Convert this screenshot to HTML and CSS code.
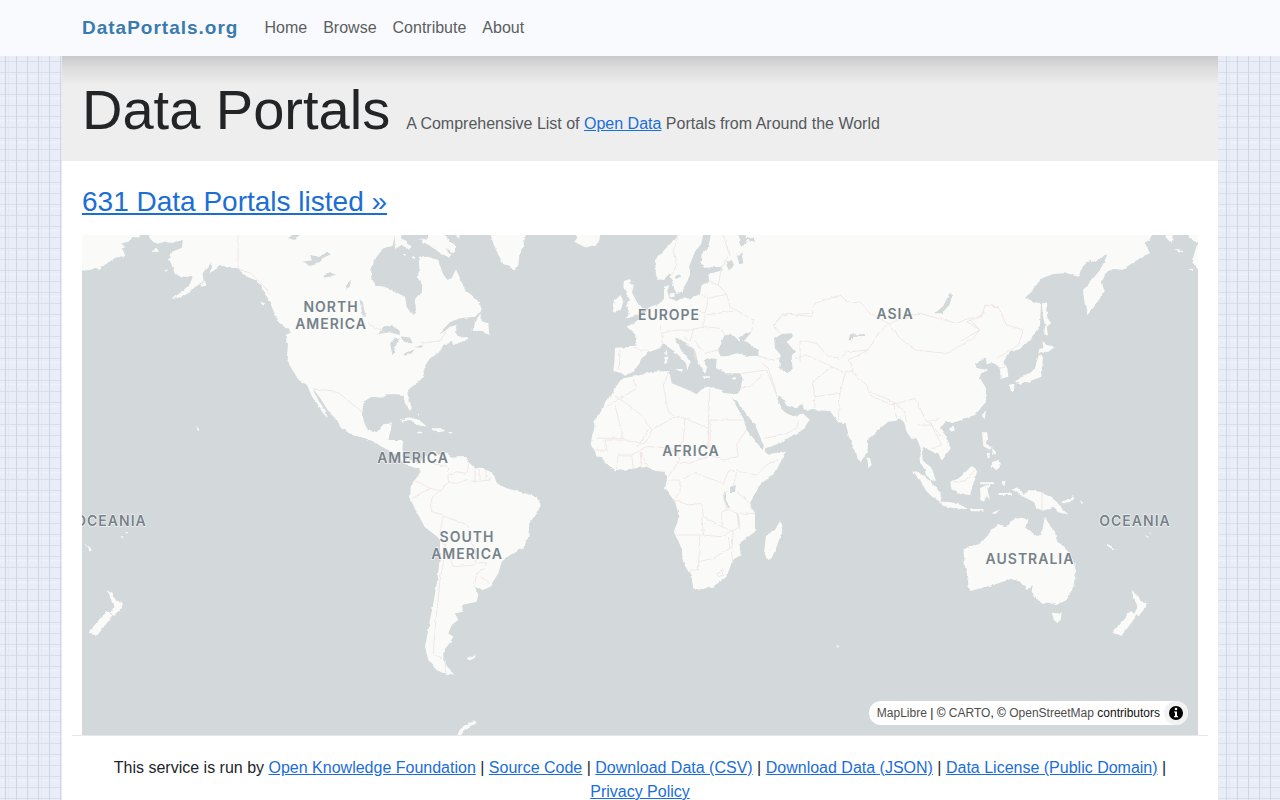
FILE: index.html
```html
<!DOCTYPE html>
<html lang="en">
<head>
<meta charset="utf-8">
<meta name="viewport" content="width=device-width, initial-scale=1">
<title>Data Portals</title>
<link rel="stylesheet" href="styles.css">
</head>
<body>
<header class="navbar">
  <nav class="navbar-inner">
    <a class="brand" href="#">DataPortals.org</a>
    <ul class="nav-links">
      <li><a href="#">Home</a></li>
      <li><a href="#">Browse</a></li>
      <li><a href="#">Contribute</a></li>
      <li><a href="#">About</a></li>
    </ul>
  </nav>
</header>
<div class="page">
  <section class="hero">
    <h1>Data Portals</h1>
    <p>A Comprehensive List of <a href="#">Open Data</a> Portals from Around the World</p>
  </section>
  <main class="content">
    <h2><a href="#">631 Data Portals listed »</a></h2>
    <div class="map">
      <svg class="world" viewBox="82 235 1116 500" preserveAspectRatio="xMidYMid slice" role="img" aria-label="World map">
        <defs>
          <filter id="coast" x="0" y="0" width="100%" height="100%">
            <feTurbulence type="fractalNoise" baseFrequency="0.18" numOctaves="2" seed="4"/>
            <feDisplacementMap in="SourceGraphic" scale="3" xChannelSelector="R" yChannelSelector="G"/>
          </filter>
        </defs>
        <g filter="url(#coast)">
        <rect class="sea" x="72" y="225" width="1136" height="520"/>
        <g class="land">
          <!-- Alaska, Canada west, USA west, Mexico -->
          <g transform="translate(82 235) scale(.33333)">
            <path d="M-20-20H172L170 8 150 5 140 20 118 25 130 36 120 40 130 62 100 68 70 88 52 105 42 98 25 105-20 108Z"/>
            <path d="M200-20L202 8 215 22 228 26 248 20 270 24 290 18 302 18 300 38 270 50 262 75 270 92 280 118 300 125 332 125 325 145 300 170 268 192 292 188 320 175 345 150 365 140 362 115 388 82 390 98 378 118 408 98 412 90 440 98 465 100 495 125 520 135 540 155 550 180 567 210 580 240 600 262 627 292 614 300 618 330 614 370 622 390 650 435 675 450 690 485 705 505 720 530 738 552 730 525 712 500 698 475 694 462 715 490 740 530 765 555 778 580 810 600 850 610 885 620 900 635V590L875 592 850 577 838 550 842 520 846 500 860 487H866V300L850 150V-20Z"/>
            <path d="M247 102L258 105 250 110ZM208 44L225 42 232 50 215 50ZM355 148L368 140 374 148 360 156ZM535 200L550 205 542 212ZM580 245L598 252 622 278 612 280 590 262ZM344 572L352 580 346 586Z"/>
          </g>
          <!-- Canada east, USA east, Greenland, Caribbean -->
          <g transform="translate(360 235) scale(.33333)">
            <path d="M-5-20H108L98 32 70 40 50 65 35 95 32 125 48 152 75 155 105 170 135 185 140 215 155 238 168 228 165 192 185 170 187 150 173 128 178 100 176 68 200 65 235 75 248 115 262 135 275 130 288 103 305 140 315 165 335 180 360 205 364 228 345 245 300 250 270 262 235 298 250 292 270 275 290 270 285 290 295 305 320 303 325 312 290 327 278 330 275 318 250 330 235 355 210 370 190 400 192 425 175 440 150 460 142 475 150 500 155 520 150 528 135 505 130 480 110 478 80 478 70 488 35 485 10 500 5 530 12 560 25 590 50 592 70 568 95 565 92 590 85 615 125 618 128 650 120 665 95 650 65 635 45 622-5 600V480H-5Z"/>
            <path d="M103-20H122L125 8 155 35 145 44 125 30 105 42ZM172 15L188 10 186 25 210 30 235 50 268 68 275 60 255 38 285 55 285 30 265 15 248-20H200L205 10ZM128 60l8-6 2 8ZM154 66l8-2v10ZM285-20h12l2 30-8 0Z"/>
            <path d="M386-20L400 25 415 60 430 88 448 92 465 106 475 90 478 60 490 30 502-20ZM635-20L652 8 643 20 662 30 680 40 705 32 718 18 722-20Z"/>
            <path d="M362 235L352 250 337 285 365 284 375 294 388 299 385 265 362 258Z"/>
            <path d="M120 553L150 547 180 558 200 574 180 572 150 555 125 560ZM215 580L240 580 256 588 235 592 218 588ZM266 591H279V595H266ZM172 590H186V595H172ZM174 530l4 12-4-2Z"/>
          </g>
          <!-- Central and South America, Antarctic Peninsula -->
          <g transform="translate(360 440) scale(.33333)">
            <path d="M45 0H130L126 30 134 58 160 62 182 72 188 92 168 84 140 75 115 50 98 25Z"/>
            <path d="M178 80L185 58 220 35 228 30 235 45 252 35 275 50 310 48 325 65 345 85 375 88 400 100 410 130 440 145 490 158 530 170 543 195 530 220 508 250 505 290 490 325 450 345 425 365 415 400 390 440 370 450 345 442 355 465 350 485 305 495 310 515 285 520 295 540 275 555 265 580 280 590 265 615 250 640 250 660 265 685 282 700 262 706 230 690 205 660 195 620 205 570 210 540 222 480 232 420 240 350 240 300 232 290 195 262 175 225 150 180 152 140 165 120 182 95Z"/>
            <path d="M320 654L330 650 347 646 343 656 326 661ZM290 890L300 868 325 852 345 841 349 848 315 868 300 890Z"/>
          </g>
          <!-- Europe and North Africa -->
          <g transform="translate(580 235) scale(.33333)">
            <path d="M295-20L290 8 262 35 225 75 228 120 235 135 252 132 270 115 278 145 290 178 308 168 325 130 333 115 327 95 345 50 365 25 372-20Z"/>
            <path d="M397-20L385 35 365 58 362 80 372 98 425 95 428 106 385 118 388 140 365 150 360 178 330 190 300 192 290 198 270 190 262 170 268 150 252 155 252 195 235 208 210 215 185 245 165 262 140 275 165 298 170 335 105 338 103 380 100 408 125 415 135 422 165 408 185 370 210 350 232 342 250 328 262 335 285 350 300 365 318 385 322 403 332 380 325 368 305 348 288 318 286 308 300 312 325 330 345 345 352 375 365 402 375 416 382 400 372 376 385 368 410 372 408 400 440 415 480 415 488 430 480 470 470 478 440 475 425 465 385 455 370 458 350 478 325 465 275 445 268 408 220 410 155 425 130 430 115 445 100 470 80 505 45 560 40 600 35 625 50 665H530L556 640 600 625 640 600 670 585 690 555 668 535 660 525 700 522V-20Z"/>
            <path d="M132 138L150 132 148 145 162 150 156 172 170 200 186 222 180 238 136 252 150 235 138 212 150 195 138 175 130 155ZM105 195L122 180 130 200 122 225 98 230ZM285 402L308 402 306 412ZM253 366l9-1-1 20-8 2ZM256 350l5-5 1 15-5 0ZM368 424h22v5h-20ZM453 431l14-5-4 8ZM270 175l14-2 0 12-12 2Z"/>
          </g>
          <!-- Central and South Asia -->
          <g transform="translate(760 235) scale(.33333)">
            <path d="M-5-20H640V540L590 560 556 562 540 580 560 605 572 640 545 677 535 655 510 648 494 635 486 650 488 675 515 715 495 705 480 680 482 640 470 610 455 612 440 590 432 562 415 550 410 557 385 560 355 585 325 612 322 650 302 682 285 650 265 600 258 565 235 562 210 528 150 525 120 515-5 500Z"/>
            <path d="M322 665l8 5 5 20-10 10ZM570 578l12-3 2 10-10 5Z"/>
          </g>
          <!-- East Asia and Siberia -->
          <g transform="translate(960 235) scale(.33333)">
            <path d="M-5-20H580L572 8 555 25 570 55 552 62 500 95 490 104 460 102 440 112 425 140 432 165 420 190 395 225 382 240 373 200 369 165 385 148 420 105 442 62 432 60 405 82 388 75 368 95 355 125 320 115 280 117 245 130 225 155 195 190 215 197 243 208 240 270 215 310 180 342 150 352 130 380 142 400 145 425 122 432 120 402 100 380 80 388 78 370 45 385 50 400 85 405 62 416 60 430 78 460 78 500 45 540-5 556Z"/>
            <path d="M608-20L618 8 636 26 640-20ZM680-20L688 10 714 25 730-20ZM730 20L710 32 696 80 714 105 730 105ZM648 42L665 44 670 52 652 48ZM686 103l14-2-2 8Z"/>
            <path d="M246 205L258 203 262 248 273 265 260 275 264 300 252 302 255 270 248 240ZM248 318L262 330 286 335 265 350 245 350 235 356 238 342 250 340ZM236 360L249 366 244 425 205 440 190 443 165 441 175 430 208 418 225 398ZM146 450L162 446 164 455 155 472ZM168 446L188 440 182 451ZM66 542L78 524 74 556Z"/>
            <path d="M66 592l15 0 3 20-8 12 20 14-6 6-20-10ZM80 652l12 4-4 14-6-2ZM96 640l12 10-2 10-8-6ZM96 682l20-8 4 22-11 10-13-12Z"/>
          </g>
          <!-- Africa and Arabia -->
          <g transform="translate(580 400) scale(.33333)">
            <path d="M85-10L60 40 40 65 45 80 35 110 33 130 70 180 105 214 130 210 200 200 225 212 250 215 262 230 255 265 285 305 298 350 282 395 305 450 310 490 335 530 340 565 350 570 400 560 440 530 458 480 482 465 478 430 525 395 525 340 510 310 535 260 590 210 618 152 570 162 555 155 545 140 500 90 480 30 465-10Z"/>
            <path d="M600 362L607 390 590 440 575 475 565 480 552 460 558 405 585 390Z"/>
          </g>
          <!-- South-east Asia and Oceania -->
          <g transform="translate(880 440) scale(.33333)">
            <path d="M95 90L115 96 150 123 182 158 182 186 160 174 138 152 122 122ZM118 40L128 62 155 83 168 122 155 122 138 105 132 80 120 68ZM182 185L210 186 240 194 264 206 235 208 188 197ZM210 125L240 112 275 78 292 90 285 120 270 165 240 162 215 148ZM300 145l14-8 22-3-14 12 8 34-12-14-8 20-8-10ZM300 127h42v6h-40ZM366 120l11 2-4 16-6-4ZM355 159h40v6h-38ZM270 207h40v7h-38ZM334 220l26-12-14 14Z"/>
            <path d="M395 148L415 142 426 155 430 165 445 150 480 155 510 170 530 185 550 210 565 223 540 218 520 200 490 212 470 205 460 185 430 170ZM545 184l26-6 8-14 4 12-14 14-22 0ZM600 180l10 8-5 4ZM682 310l26 20-8-1-18-12ZM795 287l13 3-8 4ZM808 279l9-2-3 6Z"/>
            <path d="M250 330L265 320 300 312 320 290 335 270 355 255 378 262 390 245 410 235 445 240 438 265 470 288 485 280 495 230 508 255 525 275 530 300 560 330 582 365 588 395 580 440 560 480 530 495 505 488 480 488 455 455 458 435 440 450 420 425 395 416 340 435 300 445 275 452 262 440 268 425 255 380Z"/>
            <path d="M515 518L530 520 545 518 542 540 532 550 522 540ZM753 450L772 463 782 484 803 486 797 502 776 528 763 521 773 500ZM752 513L770 526 748 557 724 588 698 578 720 550Z"/>
          </g>
          <g transform="translate(60 500) scale(.33333)">
            <path d="M140 268L158 278 168 302 190 306 185 322 165 348 151 339 161 318ZM139 333L157 346 135 377 110 408 86 398 108 370ZM72 130L96 150 88 151ZM181 107l13 3-8 4ZM195 97l10-2-4 6Z"/>
          </g>
          <path d="M836 645l3 1-1 2Z"/>
        </g>
        <!-- Inland seas and lakes -->
        <g class="sea">
          <g transform="translate(82 235) scale(.33333)">
            <path d="M832 193L842 200 852 245 842 240ZM660 80L690 76 684 60 712 66 735 50 747 58 725 68 710 85 685 93ZM724 130L735 114 766 118 750 122ZM792 162L798 145 807 138 803 155ZM618 10L640-8 657-5 640 14Z"/>
          </g>
          <g transform="translate(360 235) scale(.33333)">
            <path d="M55 297L70 275 95 270 120 292 118 300 88 292ZM97 360L90 325 105 308 122 312 106 330 102 355ZM120 303L150 308 158 325 140 324 130 315ZM130 358L165 342 155 355 135 362ZM160 336L190 330 185 338Z"/>
          </g>
          <g transform="translate(580 235) scale(.33333)">
            <path d="M415 350L432 302 455 296 475 315 500 320 535 345 535 362 505 364 470 355 440 364 422 364ZM475 308L492 298 515 290 500 312 482 318ZM582 312L605 297 635 295 635 308 620 320 645 350 635 362 638 405 620 415 598 400 602 360 585 340Z"/>
            <path d="M455 485L475 505 495 530 525 570 552 632 548 645 520 610 500 585 490 550 470 515ZM588 480L612 495 620 512 645 520 664 508 672 522 668 536 640 544 612 530 598 505Z"/>
            <path d="M478-8L500-8 500 10 520 5 525 20 502 15 486 38 478 25ZM438 80L455 75 462 90 445 107ZM472 65L484 52 490 85 478 88ZM284 125L298 118 300 126 288 132Z"/>
          </g>
          <g transform="translate(760 235) scale(.33333)">
            <path d="M525 235L550 213 568 175 579 177 568 210 545 235ZM266 316L270 298 315 298 315 303 282 302 272 316Z"/>
          </g>
          <path d="M730 487l6-3-1 8-5 0ZM724 492l2 0 0 8 4 8-2 0-4-8ZM737 512l1 0 2 13-2 0Z"/>
        </g>
        <!-- Country borders -->
        <g class="borders">
          <path d="M238 235V269L250 273 262 284 270 294M367 323L386 333M422 343L440 341 446 332M313 389L336 391 350 402 362 412"/>
          <g transform="translate(360 440) scale(.33333)">
            <path d="M225 42L215 70 262 80 265 125 242 152 210 145 180 128 165 124M155 175L190 155 210 145M242 152L215 175 215 215 240 222 250 228 285 240 325 260 328 300 345 325 350 370 380 365 375 385 350 400 342 442M355 405L390 430M250 228L240 275 252 310 250 370 240 420 232 500 225 570 220 640 245 660M265 105L290 95 320 100 330 70M262 125L290 130 320 120 345 125 345 90M345 125L390 120 400 100M360 90V120M378 90V120M252 310L280 380 345 375M256 660V700"/>
          </g>
          <g transform="translate(580 235) scale(.33333)">
            <path d="M295 0L280 50 290 90 275 120M430 0L448 60 425 95 415 150 440 178 450 215 520 255 515 290M390 140L415 150M365 180L385 190 440 178M385 190L375 235 340 220M380 240L460 228M240 270L245 295 290 285 330 285 375 275 420 280 435 300M250 330L245 295M310 305L330 320 340 285M320 325L345 345 345 370M345 320L375 355 415 345M375 240L370 280M120 345L118 405M165 340L210 350M535 360L565 375 600 370M580 270L610 240 690 235M580 270L600 295M485 415L560 405 590 480M480 460L510 455 545 420M160 430L170 460 105 500 80 515M105 480L185 540 215 585 285 545 315 550 385 580 390 460M105 510L130 610H50M268 410L250 450 265 530 285 545M315 550L310 620 260 660M390 555H490M385 580V640M215 585L200 620 170 635M550 610L610 600 650 580 655 560"/>
          </g>
          <g transform="translate(760 235) scale(.33333)">
            <path d="M0 380L25 400 50 475M40 270L70 235 155 245 165 205 240 180 270 205 300 200 330 235 385 265M385 265L355 295 325 345 265 350 240 370 205 365 170 325 120 315V380M385 265L420 310 465 345 560 355 640 310 660 285 625 250 590 265 480 235 385 265M625 250L665 245 675 210 715 215M105 370L140 360 215 395 250 410M160 440L165 520M160 440L215 395M165 485L240 475 255 415 280 405M240 475L235 555M280 405L265 375 325 345M270 405L320 450 330 480 395 510 465 490 475 510M330 470L400 500 410 550M400 505L430 520 440 560M475 510L500 560 540 550M475 570L515 570 545 630 515 640M505 560L550 610"/>
          </g>
          <g transform="translate(960 235) scale(.33333)">
            <path d="M0 320L60 285 20 260 65 245 75 210 115 215 140 270 190 285 175 330 110 370M115 400L135 395"/>
          </g>
          <g transform="translate(580 400) scale(.33333)">
            <path d="M40 150L80 150 75 120H150L180 130 205 90M110 210L115 165 155 165 160 205M185 200L180 155 205 200M155 165L200 140 290 145 300 180 265 230M290 185L330 190 390 165 430 180 475 170M390 60V150M475 210L445 215 430 250 345 220 310 235M475 215L530 225 560 195 595 180M475 170L470 130 500 90M470 215L460 260M445 265L430 290 440 330 425 335V380L370 350 365 310 325 315 280 300M265 240H300L300 275 280 300M365 350L370 405H290M370 405L420 410 460 390 480 380 470 340H525M360 405L355 510 330 510M355 485L400 475 450 445 445 410M425 380L460 395 455 450 458 490M410 520L425 510 430 525 415 530ZM470 275L510 310M440 330L470 335 480 390"/>
          </g>
          <path d="M1042 492V511M952 482L965 481 975 470"/>
        </g>
        </g>
        <g class="labels">
          <text x="331" y="312">NORTH</text>
          <text x="331" y="329">AMERICA</text>
          <text x="669" y="320">EUROPE</text>
          <text x="895" y="319">ASIA</text>
          <text x="413" y="463">AMERICA</text>
          <text x="691" y="456">AFRICA</text>
          <text x="467" y="542">SOUTH</text>
          <text x="467" y="559">AMERICA</text>
          <text x="1030" y="564">AUSTRALIA</text>
          <text x="1135" y="526">OCEANIA</text>
          <text x="111" y="526">OCEANIA</text>
        </g>
      </svg>
      <div class="attribution">
        <span><a href="#">MapLibre</a> | © <a href="#">CARTO</a>, © <a href="#">OpenStreetMap</a> contributors</span>
        <button type="button" aria-label="Toggle attribution">
          <svg viewBox="0 0 24 24" width="24" height="24" aria-hidden="true">
            <circle cx="12" cy="12" r="7"/>
            <circle class="mark" cx="12" cy="8" r="1.3"/>
            <path class="mark" d="M10 10.4h3v4.6h1v1.2h-4v-1.2h1v-3.4h-1z"/>
          </svg>
        </button>
      </div>
    </div>
  </main>
  <footer class="footer">
    This service is run by <a href="#">Open Knowledge Foundation</a> |
    <a href="#">Source Code</a> |
    <a href="#">Download Data (CSV)</a> |
    <a href="#">Download Data (JSON)</a> |
    <a href="#">Data License (Public Domain)</a> |
    <a href="#">Privacy Policy</a>
  </footer>
</div>
</body>
</html>
```
FILE: styles.css
```css
* {
  box-sizing: border-box;
}

body {
  margin: 0;
  font-family: "Liberation Sans", Arial, sans-serif;
  font-size: 16px;
  line-height: 24px;
  color: #212529;
  background-color: #e9edf8;
  background-image:
    linear-gradient(90deg, #d0d5e4 1px, transparent 1px),
    linear-gradient(#d9deeb 1px, transparent 1px),
    linear-gradient(90deg, #e3e8f5 1px, transparent 1px),
    linear-gradient(#f0f3fb 1px, transparent 1px);
  background-size: 11px 11px, 11px 11px, 33px 33px, 22px 22px;
  background-position: 5px 6px, 5px 6px, 8px 0, 0 10px;
}

a {
  color: #1b6ed6;
}

.navbar {
  background: #f8fafd;
}

.navbar-inner {
  display: flex;
  align-items: center;
  gap: 18px;
  max-width: 1156px;
  min-height: 56px;
  margin: 0 auto;
  padding: 0 20px;
}

.brand {
  font-size: 19px;
  font-weight: 700;
  letter-spacing: 1px;
  color: #3a7aae;
  text-decoration: none;
}

.nav-links {
  display: flex;
  margin: 0;
  padding: 0;
  list-style: none;
}

.nav-links a {
  display: block;
  padding: 8px;
  color: #5c5e60;
  text-decoration: none;
}

.page {
  max-width: 1156px;
  margin: 0 auto;
  background: #fff;
}

.hero {
  display: flex;
  flex-wrap: wrap;
  align-items: baseline;
  column-gap: 16px;
  padding: 20px 20px 18px;
  background: linear-gradient(#c9c9c9, #dcdcdc 12px, #eee 30px);
}

.hero h1 {
  margin: 0;
  font-size: 56px;
  font-weight: 400;
  line-height: 67px;
  color: #222426;
}

.hero p {
  margin: 0;
  color: #55595c;
}

.content {
  padding: 24px 20px 0;
}

.content h2 {
  margin: 0 0 16px;
  font-size: 28px;
  font-weight: 400;
  line-height: 34px;
}

.map {
  position: relative;
}

.world {
  display: block;
  width: 100%;
  height: 500px;
}

.sea {
  fill: #d3d8da;
}

.land {
  fill: #fafbf9;
}

.borders {
  fill: none;
  stroke: #f0e6e7;
  stroke-width: 1;
}

.borders g {
  stroke-width: 3;
}

.labels {
  font-family: Inter, "Open Sans", sans-serif;
  font-size: 14px;
  font-weight: 600;
  letter-spacing: 1px;
  fill: #76828a;
  stroke: #fafbf9;
  stroke-width: 1;
  paint-order: stroke;
  text-anchor: middle;
}

.attribution {
  position: absolute;
  right: 10px;
  bottom: 10px;
  display: flex;
  align-items: center;
  gap: 4px;
  padding-left: 8px;
  border-radius: 12px;
  background: #fff;
  color: #111;
  font-size: 12px;
}

.attribution a {
  color: #4d4d4d;
  text-decoration: none;
}

.attribution button {
  display: block;
  height: 24px;
  padding: 0;
  border: 0;
  border-radius: 12px;
  background: #f2f2f2;
}

.attribution svg {
  display: block;
}

.attribution .mark {
  fill: #fff;
}

.footer {
  margin: 0 10px;
  padding: 20px 16px;
  border-top: 1px solid #e5e7e9;
  text-align: center;
}
```
